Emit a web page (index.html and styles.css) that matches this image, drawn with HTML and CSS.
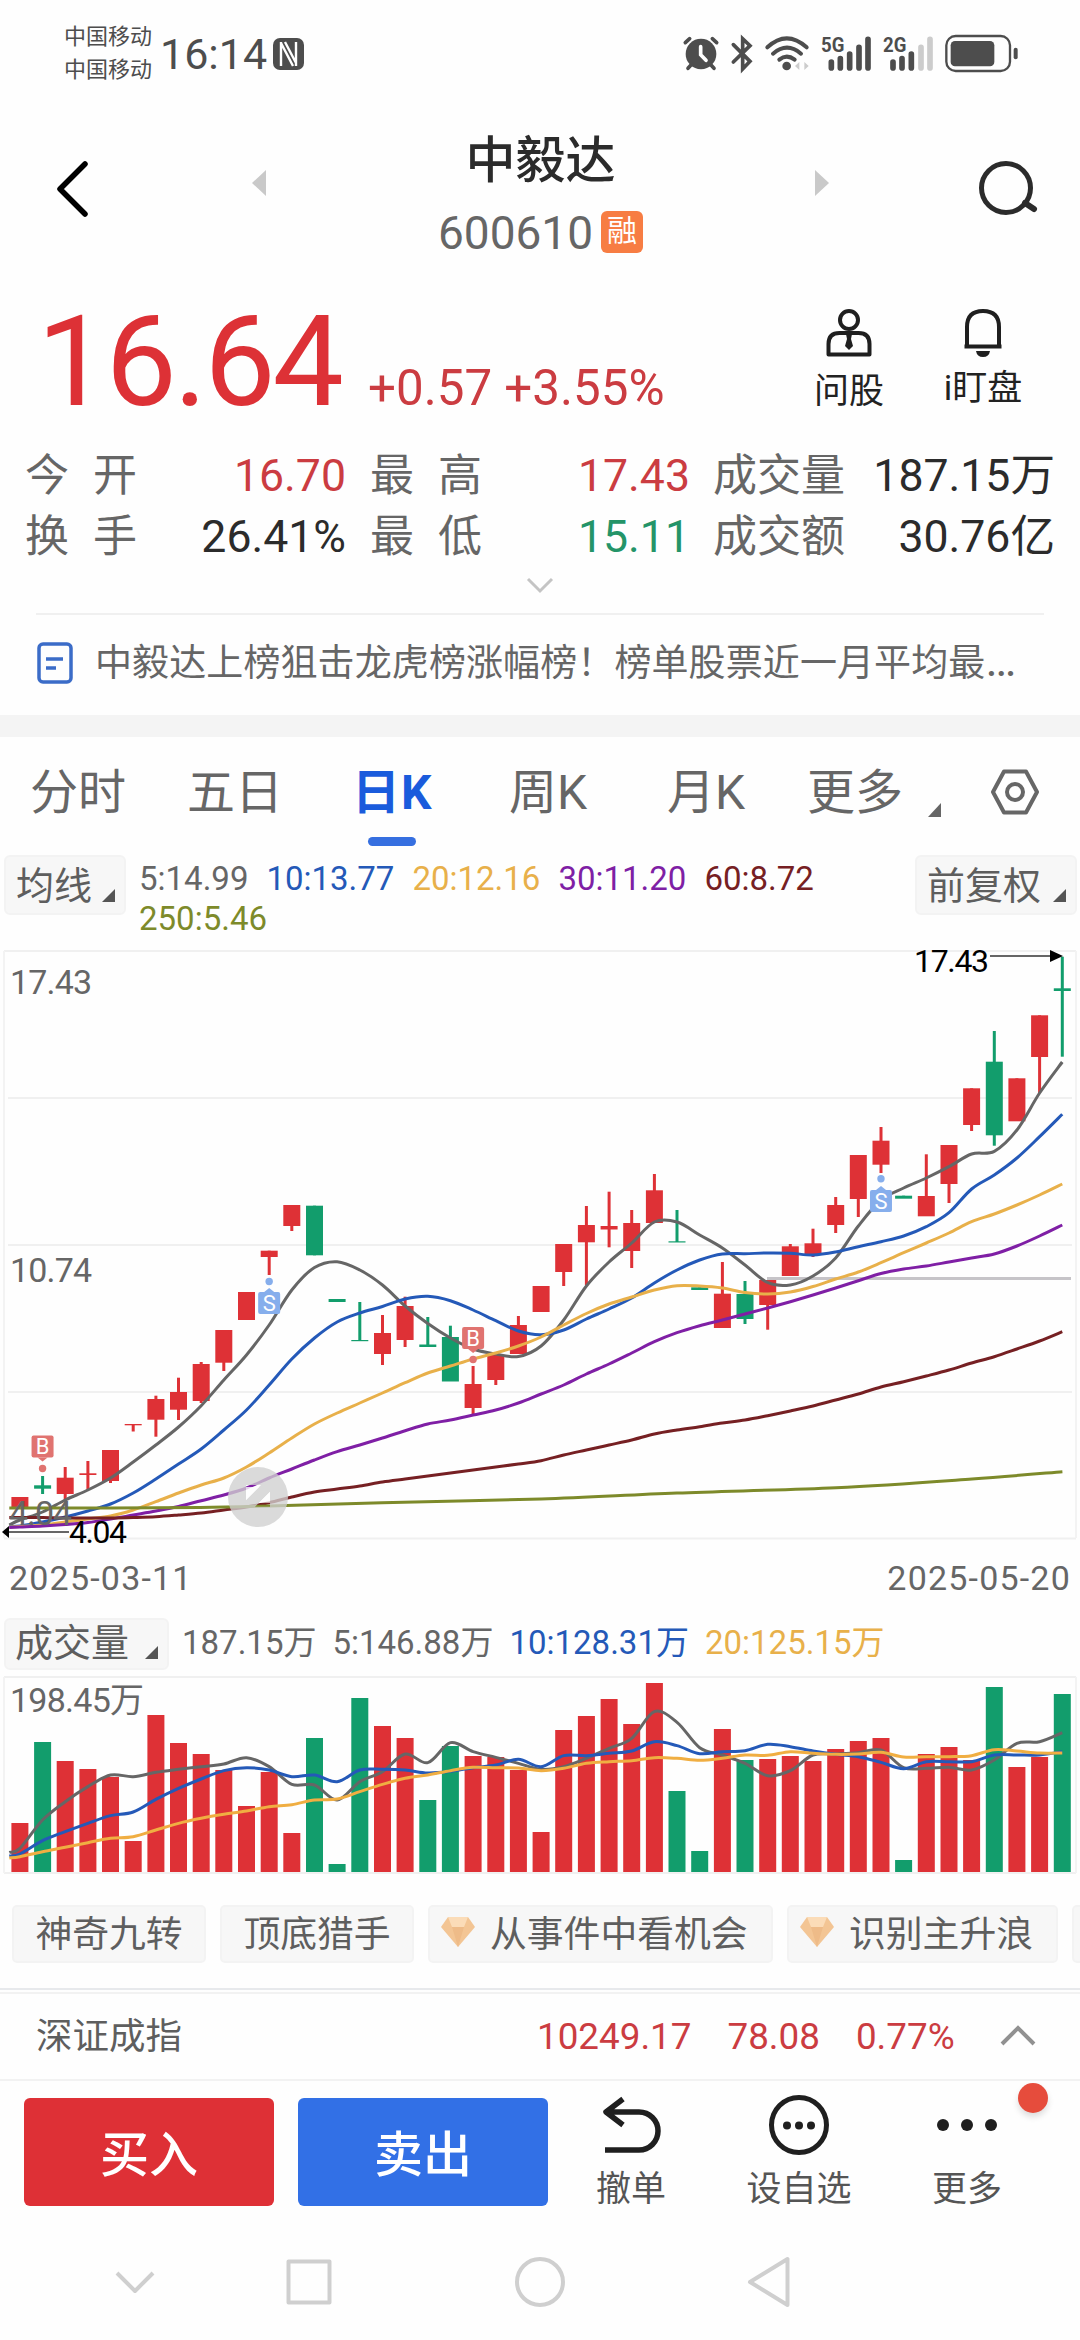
FILE: index.html
```html
<!DOCTYPE html>
<html lang="zh-CN">
<head>
<meta charset="utf-8">
<title>中毅达 600610</title>
<link rel="stylesheet" href="styles.css">
</head>
<body>
<div class="statusbar">
  <div class="carriers"><span>中国移动</span><span>中国移动</span></div>
  <span class="clock">16:14</span>
  <svg class="nfc" width="31" height="32" viewBox="0 0 31 32"><rect width="31" height="32" rx="7" fill="#4d4d4d"/><path d="M8 4v24M8 5l12 23M23 28V4M12 4l11 21" fill="none" stroke="#fff" stroke-width="2.4"/></svg>
  <svg class="sysicons" width="360" height="60" viewBox="0 0 1080 180">
    <g fill="#4d4d4d">
      <circle cx="93" cy="90" r="46"/>
      <g stroke="#4d4d4d" stroke-width="11" stroke-linecap="round" fill="none">
        <path d="M46 56l13-12M140 56l-13-12M65 121l-11 12M121 121l11 12"/>
        <path d="M190 62l50 50-22 23V44l22 21-50 49"/>
        <path d="M292 70q58-54 118 0M309 89q42-36 84 0M328 107q22-18 46 0" stroke-width="12"/>
      </g>
      <path d="M92 68v24l16 17" stroke="#fff" stroke-width="11" stroke-linecap="round" fill="none"/>
      <circle cx="350" cy="126" r="13"/>
      <path d="M375 126l13-12v24zM416 126l-13-12v24z" fill="#ccc"/>
      <path d="M484 114v18M511 104v28M539 90v42M567 70v62M594 46v86M669 114v18M696 104v28M724 90v42" stroke="#4d4d4d" stroke-width="17" stroke-linecap="round"/>
      <path d="M753 70v62M780 46v86" stroke="#ccc" stroke-width="17" stroke-linecap="round"/>
      <text x="453" y="83" class="net" textLength="70" lengthAdjust="spacingAndGlyphs">5G</text>
      <text x="639" y="83" class="net" textLength="70" lengthAdjust="spacingAndGlyphs">2G</text>
      <rect x="829" y="36" width="191" height="105" rx="28" fill="none" stroke="#4d4d4d" stroke-width="7"/>
      <rect x="842" y="51" width="131" height="76" rx="13"/>
      <rect x="1031" y="71" width="12" height="35" rx="6"/>
    </g>
  </svg>
</div>

<header class="header">
  <svg class="back" width="40" height="66" viewBox="0 0 40 66"><path d="M33 8L8 33l25 25" fill="none" stroke="#000" stroke-width="5.5" stroke-linecap="round" stroke-linejoin="round"/></svg>
  <svg width="14" height="26" viewBox="0 0 14 26" class="prev"><path d="M14 0v26L0 13z" fill="#c9c9c9"/></svg>
  <div class="stock">
    <h1>中毅达</h1>
    <div class="code"><span>600610</span><span class="tag">融</span></div>
  </div>
  <svg width="14" height="26" viewBox="0 0 14 26" class="next"><path d="M0 0v26l14-13z" fill="#c9c9c9"/></svg>
  <svg class="search" width="64" height="64" viewBox="0 0 64 64"><circle cx="31" cy="31" r="24.5" fill="none" stroke="#2b2b2b" stroke-width="5"/><path d="M50 46l9 6" stroke="#2b2b2b" stroke-width="6" stroke-linecap="round"/></svg>
</header>

<section class="quote">
  <span class="price">16.64</span>
  <span class="change">+0.57 +3.55%</span>
  <div class="tool ask">
    <svg width="46" height="50" viewBox="0 0 46 50"><g fill="none" stroke="#1f1f1f" stroke-width="4"><circle cx="23" cy="12" r="9"/><path d="M2.500 46.500V36q0-11 11-11h19q11 0 11 11v10.500z" stroke-linejoin="round"/></g><path d="M20 26h6l-1 5 2 7-4 4-4-4 2-7z" fill="#1f1f1f"/></svg>
    <span>问股</span>
  </div>
  <div class="tool watch">
    <svg width="40" height="50" viewBox="0 0 40 50"><path d="M4 38.500V19Q4 3 20 3t16 16v19.500zM1.500 38.500h37" fill="none" stroke="#1f1f1f" stroke-width="4" stroke-linejoin="round"/><path d="M13 43h14q-1 6-7 6t-7-6z" fill="#1f1f1f"/></svg>
    <span>i盯盘</span>
  </div>
</section>

<section class="stats">
  <span class="k"><i>今</i><i>开</i></span><span class="v up">16.70</span><span class="k"><i>最</i><i>高</i></span><span class="v up">17.43</span><span class="k">成交量</span><span class="v">187.15万</span>
  <span class="k"><i>换</i><i>手</i></span><span class="v">26.41%</span><span class="k"><i>最</i><i>低</i></span><span class="v down">15.11</span><span class="k">成交额</span><span class="v">30.76亿</span>
</section>
<div class="expand"><svg width="28" height="18" viewBox="0 0 28 18"><path d="M2 3l12 12L26 3" fill="none" stroke="#c4c4c4" stroke-width="3"/></svg></div>

<section class="news">
  <svg width="36" height="42" viewBox="0 0 36 42"><rect x="2" y="2" width="32" height="38" rx="4" fill="none" stroke="#3b6cc8" stroke-width="3.500"/><path d="M9 17h17M9 26h10" stroke="#3b6cc8" stroke-width="3.500"/></svg>
  <span>中毅达上榜狙击龙虎榜涨幅榜！榜单股票近一月平均最<i>…</i></span>
</section>
<div class="band"></div>

<nav class="tabs">
  <span>分时</span><span>五日</span><span class="on">日K</span><span>周K</span><span>月K</span><span>更多</span>
  <svg class="corner" width="13" height="14" viewBox="0 0 13 14"><path d="M13 0v14H0z" fill="#666"/></svg>
  <svg class="gear" width="50" height="48" viewBox="0 0 50 48"><path d="M14 3.500h22L47 24 36 44.500H14L3 24z" fill="none" stroke="#666" stroke-width="4" stroke-linejoin="round"/><circle cx="25" cy="24" r="8" fill="none" stroke="#666" stroke-width="4"/></svg>
</nav>

<section class="mabar">
  <div class="select"><span>均线</span><svg width="13" height="13" viewBox="0 0 13 13"><path d="M13 0v13H0z" fill="#555"/></svg></div>
  <div class="malist"><span class="c5">5:14.99</span><span class="c10">10:13.77</span><span class="c20">20:12.16</span><span class="c30">30:11.20</span><span class="c60">60:8.72</span><span class="c250">250:5.46</span></div>
  <div class="select"><span>前复权</span><svg width="13" height="13" viewBox="0 0 13 13"><path d="M13 0v13H0z" fill="#555"/></svg></div>
</section>

<svg id="kline" class="kline" width="1080" height="630" viewBox="0 930 1080 630"></svg>
<div class="dates"><span>2025-03-11</span><span>2025-05-20</span></div>

<section class="volbar">
  <div class="select"><span>成交量</span><svg width="13" height="13" viewBox="0 0 13 13"><path d="M13 0v13H0z" fill="#555"/></svg></div>
  <span class="c5">187.15万</span><span class="c5">5:146.88万</span><span class="c10">10:128.31万</span><span class="c20">20:125.15万</span>
</section>
<svg id="volume" class="volume" width="1080" height="205" viewBox="0 1675 1080 205"></svg>

<section class="chips">
  <span class="chip">神奇九转</span>
  <span class="chip">顶底猎手</span>
  <span class="chip gem"><svg width="34" height="30" viewBox="0 0 34 30"><path d="M7 0h20l7 10-17 20L0 10z" fill="#f3c594"/><path d="M7 0h20l-4 10H11z" fill="#fbdcb8"/><path d="M11 10h12l-6 20z" fill="#eebb88"/></svg>从事件中看机会</span>
  <span class="chip gem"><svg width="34" height="30" viewBox="0 0 34 30"><path d="M7 0h20l7 10-17 20L0 10z" fill="#f3c594"/><path d="M7 0h20l-4 10H11z" fill="#fbdcb8"/><path d="M11 10h12l-6 20z" fill="#eebb88"/></svg>识别主升浪</span>
  <span class="chip rest"></span>
</section>

<section class="index">
  <span class="name">深证成指</span>
  <span>10249.17</span><span>78.08</span><span>0.77%</span>
  <svg width="36" height="22" viewBox="0 0 36 22"><path d="M2 20L18 4l16 16" fill="none" stroke="#919191" stroke-width="4"/></svg>
</section>

<section class="actions">
  <button class="buy">买入</button>
  <button class="sell">卖出</button>
  <div class="act cancel">
    <svg width="64" height="60" viewBox="0 0 64 60"><path d="M22 4L5 17l17 13M6 17h32a19 19 0 0 1 0 38H4" fill="none" stroke="#1f1f1f" stroke-width="5.500" stroke-linejoin="round"/></svg>
    <span>撤单</span>
  </div>
  <div class="act fav">
    <svg width="64" height="60" viewBox="0 0 64 60"><circle cx="32" cy="30" r="27.500" fill="none" stroke="#1f1f1f" stroke-width="5"/><g fill="#1f1f1f"><circle cx="20" cy="30.500" r="4"/><circle cx="32" cy="30.500" r="4"/><circle cx="44" cy="30.500" r="4"/></g></svg>
    <span>设自选</span>
  </div>
  <div class="act more">
    <svg width="64" height="60" viewBox="0 0 64 60"><g fill="#1f1f1f"><circle cx="8" cy="30" r="6"/><circle cx="32" cy="30" r="6"/><circle cx="56" cy="30" r="6"/></g></svg>
    <span>更多</span>
    <b class="badge"></b>
  </div>
</section>

<nav class="sysnav">
  <svg width="1080" height="60" viewBox="0 0 1080 60"><g fill="none" stroke="#cfcfcf" stroke-width="4" stroke-linejoin="round"><path d="M117 21l18 18 18-18"/><rect x="288.500" y="9.500" width="41" height="41"/><circle cx="540" cy="30" r="23"/><path d="M787.500 7v46L750 30z"/></g></svg>
</nav>
<script src="chart.js"></script>
</body>
</html>
```
FILE: styles.css
```css
* { box-sizing: border-box; }
body {
  margin: 0;
  width: 1080px;
  height: 2340px;
  overflow: hidden;
  background: #fefefe;
  color: #666;
  font-family: Roboto, "Noto Sans CJK SC", sans-serif;
  line-height: 1;
}
svg { display: block; flex: none; }
span { white-space: nowrap; }

.statusbar { height: 96px; display: flex; align-items: flex-start; padding: 24px 50px 0 64px; color: #4d4d4d; }
.carriers { display: flex; flex-direction: column; gap: 11px; font-size: 22px; width: 96px; margin-top: 2px; }
.clock { font-size: 43px; margin-top: 9px; width: 113px; }
.nfc { margin-top: 14px; }
.sysicons { margin-left: 366px; }
.net { font: bold 60px Roboto, sans-serif; }

.header { height: 184px; display: flex; align-items: flex-start; padding-left: 52px; }
.back { margin-top: 60px; }
.prev { margin: 74px 0 0 160px; }
.stock { width: 549px; display: flex; flex-direction: column; align-items: center; }
.stock h1 { margin: 40px 0 0; font-size: 50px; line-height: 50px; font-weight: 500; color: #2b2b2b; }
.code { display: flex; align-items: center; gap: 8px; margin-top: 22px; font-size: 46px; color: #666; }
.code span:first-child { margin-top: 2px; }
.tag { width: 42px; height: 42px; border-radius: 6px; background: #f77d43; color: #fff; font-size: 30px; line-height: 40px; text-align: center; }
.next { margin: 74px 0 0; }
.search { margin: 61px 0 0 146px; }

.quote { height: 160px; display: flex; align-items: flex-start; padding-left: 37px; }
.price { width: 331px; font-size: 127px; letter-spacing: -3px; line-height: 150px; margin-top: 7px; color: #dd3136; }
.change { width: 441px; font-size: 49.3px; margin-top: 84px; color: #cb3c41; }
.tool { width: 80px; display: flex; flex-direction: column; align-items: center; font-size: 35px; color: #222; }
.tool svg { margin-top: 28px; }
.ask span { margin-top: 16px; }
.watch { width: 90px; margin-left: 49px; }
.watch span { margin-top: 13px; }

.stats { height: 127px; display: grid; grid-template-columns: 112px 209px 112px 207px 132px 209px; grid-template-rows: 61px 60px; padding: 6px 25px 0; font-size: 44px; line-height: 60px; }
.stats .k { display: flex; justify-content: space-between; }
.stats .k:nth-child(6n+3) { margin-left: 24px; margin-right: -24px; }
.stats .k:nth-child(6n+5) { margin-left: 48px; margin-right: -48px; }
.stats .v:nth-child(6n+4) { margin-right: -25px; }
.stats .v:nth-child(6n+6) { margin-right: -49px; }
.stats i { font-style: normal; }
.v { text-align: right; font-size: 44.6px; color: #2b2b2b; }
.v.up { color: #cb3c41; }
.v.down { color: #249468; }
.expand { height: 48px; display: flex; justify-content: center; padding-top: 9px; margin: 0 36px; border-bottom: 2px solid #f0f0f0; }

.news { height: 100px; display: flex; align-items: center; gap: 22px; padding: 0 0 4px 37px; font-size: 37px; letter-spacing: 0.1px; }
.news i { font-style: normal; letter-spacing: 0; font-size: 46px; line-height: 0; }
.band { height: 22px; background: #f4f4f4; }

.tabs { height: 113px; display: flex; align-items: flex-start; padding: 32px 0 0 30px; font-size: 48px; line-height: 48px; }
.tabs span { width: 157px; }
.tabs .on { color: #1a5bdc; font-weight: 700; margin-left: 8px; width: 149px; letter-spacing: 1px; position: relative; }
.tabs .on::after { content: ""; position: absolute; left: 16px; top: 68px; width: 48px; height: 9px; border-radius: 5px; background: #366fe0; }
.tabs span:nth-child(4) { width: 158px; margin-left: 8px; }
.tabs span:nth-child(5) { width: 140px; }
.tabs span:nth-child(6) { width: 121px; }
.corner { margin-top: 34px; }
.gear { margin: -1px 0 0 49px; }

.mabar { height: 80px; display: flex; align-items: flex-start; padding: 5px 3px 0 4px; }
.select { flex: none; display: flex; align-items: flex-end; justify-content: space-between; width: 122px; height: 60px; padding: 0 9px 11px 10px; border: 2px solid #f3f3f3; border-radius: 6px; background: #f7f7f7; color: #5e5e5e; font-size: 38px; }
.select span { line-height: 38px; margin-bottom: -3px; }
.malist { width: 789px; height: 90px; padding: 4px 0 0 13px; display: flex; flex-wrap: wrap; column-gap: 18px; font-size: 33px; line-height: 40px; align-content: flex-start; }
.c5 { color: #666; }
.c10 { color: #2459b8; }
.c20 { color: #e8b04a; }
.c30 { color: #7f1fa5; }
.c60 { color: #762023; }
.c250 { color: #7d8a2a; }
.mabar .select:last-child { width: 162px; }

.kline text, .volume text { font-size: 34px; fill: #666; }
.kline text.edge { font-size: 32px; fill: #000; }
.kline text.mark { font-size: 22px; fill: #fff; }
.dates { height: 50px; display: flex; justify-content: space-between; padding: 0 9px 0 9px; font-size: 34px; letter-spacing: 1.2px; line-height: 36px; }

.volbar { height: 65px; display: flex; align-items: flex-start; padding: 8px 0 0 4px; font-size: 33px; line-height: 50px; }
.volbar .select { width: 165px; height: 52px; padding: 0 9px 9px; margin-right: 13px; }
.volbar > span { margin-right: 16px; }

.chips { height: 110px; display: flex; gap: 14px; padding: 25px 0 0 12px; overflow: hidden; border-bottom: 2px solid #e7e9ec; }
.chip { flex: none; height: 58px; border: 2px solid #f3f3f3; border-radius: 5px; background: #f7f7f7; width: 194px; text-align: center; font-size: 36.8px; line-height: 55px; color: #5e5e5e; }
.chip.gem { width: 345px; display: flex; align-items: center; gap: 15px; padding-left: 11px; }
.chip.gem + .gem { width: 271px; }
.chip.gem svg { margin-top: -4px; }

.index { height: 89px; margin-top: 2px; display: flex; align-items: center; border-top: 2px solid #f2f2f2; border-bottom: 2px solid #f2f2f2; padding: 2px 0 0 36px; font-size: 36.8px; color: #cb3c41; }
.index .name { width: 501px; color: #5e5e5e; font-size: 36.5px; }
.index span + span { margin-right: 36px; }
.index svg { margin-left: 9px; margin-top: -6px; }

.actions { height: 144px; display: flex; align-items: flex-start; padding: 17px 0 0 24px; }
.actions button { width: 250px; height: 108px; margin: 0 24px 0 0; padding: 0 0 4px; border: 0; border-radius: 6px; color: #fff; font: 500 49px "Noto Sans CJK SC", sans-serif; }
.buy { background: #de3036; }
.sell { background: #3270e6; }
.act { position: relative; width: 120px; margin-top: -3px; display: flex; flex-direction: column; align-items: center; gap: 17px; font-size: 35px; color: #555; }
.cancel { width: 118px; }
.cancel svg { margin-left: 4px; }
.fav { margin-left: 49px; }
.more { margin-left: 48px; }
.badge { position: absolute; left: 111px; top: -12px; width: 30px; height: 30px; border-radius: 50%; background: #e64c3c; box-shadow: 0 4px 6px #0002; }
.sysnav { padding-top: 27px; }
```
FILE: chart.js
```js
const RED = '#de3136', GREEN = '#129d6c';
const SLOT = 22.66, X0 = 19.9, BODY = 17;
const cx = i => X0 + SLOT * i;

const rect = (x, y, w, h, fill) => `<rect x="${x.toFixed(1)}" y="${y}" width="${w}" height="${h.toFixed(1)}" fill="${fill}"/>`;
const rule = (x1, y1, x2, y2, color = '#f0f0f0', w = 2) => `<path d="M${x1} ${y1}L${x2} ${y2}" stroke="${color}" stroke-width="${w}" fill="none"/>`;

// Catmull-Rom spline through the points
function curve(pts, color, w = 3) {
  let d = `M${pts[0]}`;
  for (let i = 0; i < pts.length - 1; i++) {
    const a = pts[i - 1] || pts[i], b = pts[i], c = pts[i + 1], e = pts[i + 2] || c;
    d += `C${b[0] + (c[0] - a[0]) / 6} ${b[1] + (c[1] - a[1]) / 6} ${c[0] - (e[0] - b[0]) / 6} ${c[1] - (e[1] - b[1]) / 6} ${c[0]} ${c[1]}`;
  }
  return `<path d="${d}" fill="none" stroke="${color}" stroke-width="${w}"/>`;
}
// first value sits at the left edge, the rest on slot centres
const series = ys => ys.map((y, i) => [i ? cx(i - 1) : 9.3, y]);

// [color, high, bodyTop, bodyBottom, low]
const candles = [
  ['r',1497,1497,1507,1507],['g',1476,1485.3,1488.7,1494],['r',1467,1477.7,1494,1501],['r',1461,1473.3,1475,1490],['r',1450,1450,1481,1483],
  ['r',1424,1424,1425.3,1431.5],['r',1395.7,1399,1419.7,1436.7],['r',1377.7,1392,1409.7,1420],['r',1362,1364,1401,1403],['r',1330,1330,1362.7,1371],
  ['r',1292,1292,1320,1320],['r',1250.7,1250.7,1257,1275],['r',1205,1205,1226,1231],['g',1205.7,1205.7,1255.3,1255.3],['g',1299,1299,1302,1302],
  ['g',1302,1340,1341.2,1341],['r',1315,1333,1354,1365],['r',1296.7,1306,1340,1347],['g',1317,1344.5,1347,1347],['g',1325.7,1337,1381.5,1381],
  ['r',1366,1384,1408,1414],['r',1355,1355,1380,1385],['r',1316,1325,1354,1354],['r',1286,1286,1312,1312],['r',1244,1244,1272,1286],
  ['r',1206,1225,1242.3,1285],['r',1191.7,1226,1229.5,1247.3],['r',1210,1223,1251,1268],['r',1174,1190.3,1223,1223],['g',1210,1241.3,1242.5,1242],
  ['g',1287.3,1287.3,1290,1290],['r',1262,1293.7,1328,1328],['g',1281,1294,1319,1324],['r',1280,1280,1305,1329.7],['r',1244,1246.3,1276,1276],
  ['r',1228.7,1243.3,1254.3,1257],['r',1197,1205,1225,1233],['r',1155,1155,1199,1217],['r',1127,1140.7,1164.7,1173],['g',1195.7,1195.7,1198.7,1198],
  ['r',1154.3,1196,1216.3,1216],['r',1145,1145,1184,1203],['r',1088.3,1088.3,1125,1131],['g',1031,1061.7,1135.3,1145.7],['r',1078.3,1078.3,1121.3,1121],
  ['r',1015.3,1015.3,1057,1093],['g',956.7,988.3,991,1056.7]
];
const ma = [
  ['#666666', [1525,1520,1512,1500,1490,1478,1462,1445,1427,1405.7,1380,1355,1325,1290,1267.5,1261.7,1270,1285,1306,1323.5,1338,1349,1354,1356.5,1346,1320,1286,1262,1243,1222,1222,1235,1248,1265,1282.5,1285,1276,1258,1226,1200,1188,1178,1166.7,1154,1151.3,1130,1093,1062]],
  ['#2459b8', [1526.5,1526,1522,1517,1511,1504,1493,1479,1464,1449,1430,1410,1385,1359,1338,1322,1313,1306.5,1299,1296.3,1300.7,1310,1320.7,1331,1334.7,1330,1319,1309,1298,1283,1270,1260,1254,1253.7,1253,1253.3,1255,1252,1246.7,1241.7,1236,1226.7,1212.7,1189,1175,1158,1136.7,1114.3]],
  ['#e8b04a', [1527,1526.5,1525,1522,1519,1516,1510,1501.7,1493,1485,1478,1467,1453,1438,1424,1413,1403,1393,1382.7,1373,1366,1359,1353,1346,1337,1325,1313.5,1304,1297,1290,1285.7,1286,1288,1292.5,1294,1292,1286.5,1279,1272,1262.7,1252.7,1243,1233,1221.7,1214,1205,1195,1184]],
  ['#7f1fa5', [1527.5,1527,1526,1524.5,1522.5,1519,1515,1511,1506.5,1500.7,1495,1488,1478,1469,1460,1451.7,1445,1438,1430.7,1424,1420,1415,1410,1403,1394,1385,1374,1364,1353,1341.7,1332.7,1325.7,1320,1314,1308,1301.7,1295,1288,1280.7,1273.5,1269,1266,1262,1258,1254,1246,1236,1225]],
  ['#762023', [1517.5,1517.5,1517.5,1518,1518,1518,1517.5,1516.7,1515,1513,1510,1507,1502.7,1497,1492,1489,1486,1482,1479,1476,1473,1470,1467,1464,1460.7,1455,1450,1445,1440,1434,1430,1426.7,1423,1420,1415.7,1411,1406,1400,1394,1387,1381.7,1376,1370,1363,1356.7,1349,1341,1331.7]]
];
const ma250 = [[9.3,1508],[110,1508],[200,1507.5],[269,1506],[382,1502.7],[541,1499],[677,1493],[836,1487.7],[972,1479],[1062.4,1471.7]];

let k = rule(4, 951, 1076, 951) + rule(4, 1538.5, 1076, 1538.5) + rule(4, 951, 4, 1538, '#f3f3f3') + rule(1076, 951, 1076, 1538, '#f3f3f3');
for (const y of [1098, 1245, 1392]) k += rule(8, y, 1072, y);
k += rule(767, 1278.5, 1071, 1278.5, '#c6c4c8', 3);
candles.forEach(([c, hi, top, bot, lo], i) => {
  const fill = c === 'r' ? RED : GREEN, x = cx(i);
  if (lo > hi) k += rect(x - 1.5, hi, 3, lo - hi, fill);
  k += rect(x - BODY / 2, top, BODY, bot - top, fill);
});
for (const [color, ys] of ma) k += curve(series(ys), color);
k += curve(ma250, '#7d8a2a');

// buy / sell markers: the dot sits on the candle side
function marker(i, boxTop, letter, dotY) {
  const x = cx(i), color = letter === 'B' ? '#e07370' : '#86aeec', below = dotY < boxTop;
  const tip = below ? `M${x - 5} ${boxTop}l5-4 5 4z` : `M${x - 5} ${boxTop + 22}l5 4 5-4z`;
  return `<circle cx="${x}" cy="${dotY}" r="3.7" fill="${color}"/><rect x="${x - 11}" y="${boxTop}" width="22" height="22" rx="2" fill="${color}"/><path d="${tip}" fill="${color}"/><text class="mark" text-anchor="middle" x="${x}" y="${boxTop + 18.5}">${letter}</text>`;
}
k += marker(1, 1435.5, 'B', 1468.5) + marker(11, 1292, 'S', 1281.5) + marker(20, 1327, 'B', 1359.5) + marker(38, 1190, 'S', 1178.7);

// round full-screen button with the two corner cut-outs
k += '<path fill-rule="evenodd" fill="#cfcfcf" fill-opacity=".78" d="M228 1497a30 30 0 1 0 60 0a30 30 0 1 0 -60 0zM246 1485h15L246 1500zM270 1491.7v15h-15z"/>';
k += '<path fill="#fefefe" fill-opacity=".8" d="M246 1487h13L246 1500zM270 1491.7v11h-11z"/>';
k += '<text x="10" y="994" textLength="82">17.43</text><text x="10" y="1282" textLength="82">10.74</text><text x="9" y="1525" textLength="63">4.04</text>';
k += rule(990, 956, 1052, 956, '#666') + '<path d="M1050 950v12l13-6z"/><text class="edge" x="914" y="972" textLength="75">17.43</text>';
k += rule(8, 1532, 69, 1532, '#666') + '<path d="M9 1526v12l-7-6z"/><text class="edge" x="69" y="1543" textLength="58">4.04</text>';
document.getElementById('kline').innerHTML = k;

const volTop = [1823,1742,1761,1769,1777,1841,1715,1743,1754,1770,1806,1772,1833,1738,1864,1698,1726,1738,1800,1746,1756,1757,1770,1832,1730,1716,1699,1724,1683,1791,1851,1729,1760,1759,1756,1761,1749,1741,1738,1860,1754,1747,1760,1687,1767,1757,1694];
const volGreen = new Set([1, 13, 14, 15, 18, 19, 29, 30, 32, 39, 43, 46]);
// averages in thirds of a pixel below y = 1600
const volMa = [
  ['#666666', [757,745,660,605,560,525,530,517,508,500,492,473,500,553,555,600,545,515,462,488,428,455,472,490,508,500,475,445,415,335,367,443,465,490,527,512,465,462,458,450,503,505,502,510,480,430,425,398]],
  ['#2459b8', [768,762,722,695,670,647,636,598,565,537,512,503,510,530,525,545,510,508,510,519,514,503,495,478,500,467,467,460,453,425,437,461,455,452,433,440,453,463,470,487,506,485,485,485,465,465,465,455]],
  ['#f0ae42', [774,770,755,742,728,715,710,690,670,655,643,633,620,614,600,597,575,553,535,525,512,502,503,504,512,505,490,485,482,473,475,481,475,465,466,455,460,463,462,457,471,470,470,467,449,453,459,459]]
];
let v = rule(4, 1677, 1076, 1677) + rule(4, 1873, 1076, 1873) + rule(4, 1677, 4, 1873, '#f3f3f3') + rule(1076, 1677, 1076, 1873, '#f3f3f3');
volTop.forEach((y, i) => { v += rect(cx(i) - BODY / 2, y, BODY, 1872 - y, volGreen.has(i) ? GREEN : RED); });
for (const [color, ys] of volMa) v += curve(series(ys.map(y => 1600 + y / 3)), color);
v += '<text x="10" y="1712" textLength="134">198.45万</text>';
document.getElementById('volume').innerHTML = v;
```
